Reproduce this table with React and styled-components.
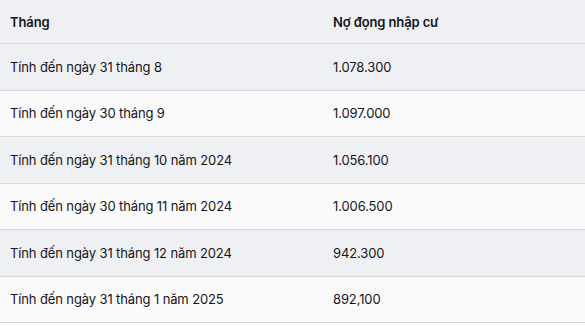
import React from 'react';
import styled, { createGlobalStyle } from 'styled-components';

const GlobalStyle = createGlobalStyle`
  body {
    margin: 0;
    background: #fff;
    font-family: Inter, "Noto Sans", sans-serif;
  }
`;

const Table = styled.table`
  width: 585px;
  border-collapse: collapse;
  font-size: 13px;
  letter-spacing: -0.12px;
  color: #16161a;
`;

const HeadCell = styled.th`
  height: 43px;
  padding: 0 10px;
  text-align: left;
  font-weight: 600;
  background: #eff0f4;
  border-bottom: 1px solid #dadade;
  width: ${({ w }) => w || 'auto'};
`;

const Row = styled.tr`
  background: ${({ alt }) => (alt ? '#fafafa' : '#eff0f4')};
`;

const Cell = styled.td`
  height: 45.5px;
  padding: 0 10px;
  border-bottom: 1px solid #dadade;
`;

const rows = [
  ['Tính đến ngày 31 tháng 8', '1.078.300'],
  ['Tính đến ngày 30 tháng 9', '1.097.000'],
  ['Tính đến ngày 31 tháng 10 năm 2024', '1.056.100'],
  ['Tính đến ngày 30 tháng 11 năm 2024', '1.006.500'],
  ['Tính đến ngày 31 tháng 12 năm 2024', '942.300'],
  ['Tính đến ngày 31 tháng 1 năm 2025', '892,100'],
];

const App = () => {
  return (
    <>
      <GlobalStyle />
      <Table>
        <thead>
          <tr>
            <HeadCell w="303px">Tháng</HeadCell>
            <HeadCell>Nợ đọng nhập cư</HeadCell>
          </tr>
        </thead>
        <tbody>
          {rows.map((r, i) => (
            <Row key={i} alt={i % 2 === 1}>
              <Cell>{r[0]}</Cell>
              <Cell>{r[1]}</Cell>
            </Row>
          ))}
        </tbody>
      </Table>
    </>
  );
};

export default App;
